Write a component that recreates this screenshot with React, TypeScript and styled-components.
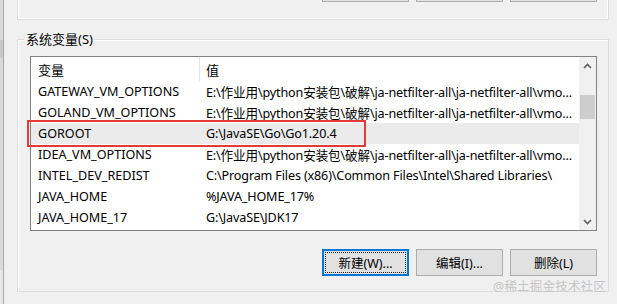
import React from "react";
import styled, { createGlobalStyle } from "styled-components";

const Global = createGlobalStyle`
  html, body { margin: 0; padding: 0; background: #f0f0f0; }
  body { font-family: "Noto Sans", "Noto Sans CJK SC", sans-serif; font-size: 12px; color: #000; }
`;

const Page = styled.div`
  width: 617px;
  height: 304px;
  display: flex;
  overflow: hidden;
  position: relative;
  background: #f0f0f0;
`;

const EdgeStrip = styled.div`
  width: 3px;
  flex: none;
  background: linear-gradient(#dadada 0 40px, #c8c8c8 40px 58px, #dadada 58px 270px, #e8e8e8 270px);
  border-right: 1px solid #a8a8a8;
`;

const Main = styled.div`
  flex: 1;
  display: flex;
  flex-direction: column;
  padding-left: 13px;
`;

const TopGroup = styled.div`
  width: 590px;
  height: 20px;
  border: 1px solid #dcdcdc;
  border-top: none;
  box-shadow: inset 1px 0 0 #fff, inset -1px -1px 0 #fff;
  display: flex;
  flex-direction: column;
  justify-content: flex-end;
  overflow: hidden;
  padding-bottom: 17px;
  box-sizing: content-box;
  margin-top: -18px;
`;

const Fieldset = styled.fieldset`
  margin: 10px 0 0 0;
  width: 592px;
  box-sizing: border-box;
  min-width: 0;
  border: 1px solid #dcdcdc;
  box-shadow: inset 1px 1px 0 #fff;
  padding: 8px 11px 15px 12px;
  display: flex;
  flex-direction: column;
`;

const Legend = styled.legend`
  margin-left: -6px;
  padding: 0 2px;
  font-size: 13px;
  line-height: 18px;
  color: #000;
`;

const ListBox = styled.div`
  position: relative;
  height: 175px;
  border: 1px solid #828282;
  background: #fff;
  display: flex;
  box-sizing: border-box;
`;

const Table = styled.div`
  flex: 1;
  display: flex;
  flex-direction: column;
  overflow: hidden;
`;

const HeaderRow = styled.div`
  display: grid;
  grid-template-columns: 168px 1fr;
  height: 24px;
  flex: none;
`;

const HeaderCell = styled.div<{ $sep?: boolean }>`
  padding-left: ${(p) => (p.$sep ? 6 : 7)}px;
  display: flex;
  align-items: center;
  font-size: 13px;
  border-left: ${(p) => (p.$sep ? "1px solid #e5e5e5" : "none")};
`;

const Row = styled.div<{ $selected?: boolean }>`
  display: grid;
  grid-template-columns: 168px 1fr;
  height: 21px;
  flex: none;
  background: ${(p) => (p.$selected ? "#ebebeb" : "transparent")};
`;

const Cell = styled.div<{ $value?: boolean }>`
  padding-left: 7px;
  display: flex;
  align-items: center;
  font-size: 12.6px;
  letter-spacing: ${(p) => (p.$value ? "-0.15px" : "0")};
  white-space: nowrap;
  min-width: 0;
`;

const ScrollBar = styled.div`
  width: 17px;
  flex: none;
  background: #f0f0f0;
  display: flex;
  flex-direction: column;
  align-items: center;
`;

const ArrowBtn = styled.div`
  height: 17px;
  width: 17px;
  display: flex;
  align-items: center;
  justify-content: center;
  flex: none;
`;

const Track = styled.div`
  flex: 1;
  width: 100%;
  display: flex;
  flex-direction: column;
  align-items: center;
`;

const Thumb = styled.div`
  margin-top: 21px;
  width: 15px;
  height: 24px;
  background: #cdcdcd;
`;

const Highlight = styled.div`
  position: absolute;
  left: -4px;
  top: 63px;
  width: 335px;
  height: 23px;
  border: 2px solid #e33b36;
  pointer-events: none;
`;

const ButtonRow = styled.div`
  display: flex;
  justify-content: flex-end;
  gap: 7px;
  flex: none;
`;

const TopButtons = styled(ButtonRow)`
  margin-right: 11px;
`;

const BottomButtons = styled(ButtonRow)`
  margin-top: 18px;
`;

const Button = styled.div<{ $default?: boolean }>`
  width: 87px;
  height: 27px;
  box-sizing: border-box;
  background: #e1e1e1;
  border: 1px solid ${(p) => (p.$default ? "#0078d7" : "#adadad")};
  box-shadow: ${(p) => (p.$default ? "inset 0 0 0 1px #0078d7" : "none")};
  display: flex;
  align-items: center;
  justify-content: center;
  font-size: 12.5px;
  position: relative;
  &::after {
    content: "";
    display: ${(p) => (p.$default ? "block" : "none")};
    position: absolute;
    inset: 2px;
    border: 1px dotted #222;
  }
`;

const Watermark = styled.div`
  position: absolute;
  right: 11px;
  bottom: 9px;
  font-size: 12.5px;
  color: #c6c6c6;
  letter-spacing: 0.2px;
`;

const Chevron = ({ up }: { up?: boolean }) => (
  <svg width="9" height="6" viewBox="0 0 9 6">
    <path
      d={up ? "M1 5 L4.5 1.5 L8 5" : "M1 1 L4.5 4.5 L8 1"}
      fill="none"
      stroke="#606060"
      strokeWidth="1.6"
    />
  </svg>
);

const LONG = "E:\\作业用\\python安装包\\破解\\ja-netfilter-all\\ja-netfilter-all\\vmo...";

const rows: { name: string; value: string; selected?: boolean }[] = [
  { name: "GATEWAY_VM_OPTIONS", value: LONG },
  { name: "GOLAND_VM_OPTIONS", value: LONG },
  { name: "GOROOT", value: "G:\\JavaSE\\Go\\Go1.20.4", selected: true },
  { name: "IDEA_VM_OPTIONS", value: LONG },
  { name: "INTEL_DEV_REDIST", value: "C:\\Program Files (x86)\\Common Files\\Intel\\Shared Libraries\\" },
  { name: "JAVA_HOME", value: "%JAVA_HOME_17%" },
  { name: "JAVA_HOME_17", value: "G:\\JavaSE\\JDK17" },
];

export default function App() {
  return (
    <Page>
      <Global />
      <EdgeStrip />
      <Main>
        <TopGroup>
          <TopButtons>
            <Button />
            <Button />
            <Button />
          </TopButtons>
        </TopGroup>
        <Fieldset>
          <Legend>系统变量(S)</Legend>
          <ListBox>
            <Table>
              <HeaderRow>
                <HeaderCell>变量</HeaderCell>
                <HeaderCell $sep>值</HeaderCell>
              </HeaderRow>
              {rows.map((r) => (
                <Row key={r.name} $selected={r.selected}>
                  <Cell>{r.name}</Cell>
                  <Cell $value>{r.value}</Cell>
                </Row>
              ))}
            </Table>
            <ScrollBar>
              <ArrowBtn>
                <Chevron up />
              </ArrowBtn>
              <Track>
                <Thumb />
              </Track>
              <ArrowBtn>
                <Chevron />
              </ArrowBtn>
            </ScrollBar>
            <Highlight />
          </ListBox>
          <BottomButtons>
            <Button $default>新建(W)...</Button>
            <Button>编辑(I)...</Button>
            <Button>删除(L)</Button>
          </BottomButtons>
        </Fieldset>
      </Main>
      <Watermark>@稀土掘金技术社区</Watermark>
    </Page>
  );
}
